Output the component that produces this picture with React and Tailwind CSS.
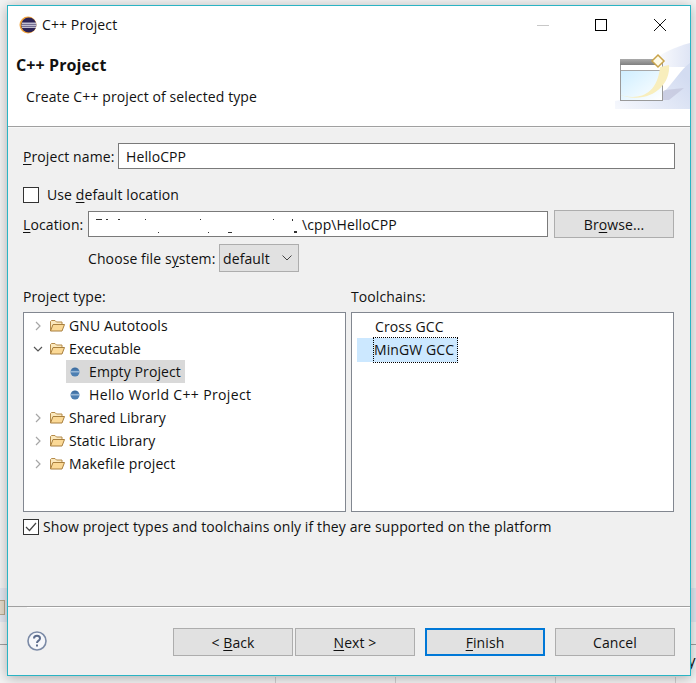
import React from "react";

const Chevron = ({ open }) => (
  <svg width="10" height="10" viewBox="0 0 10 10" className="shrink-0" fill="none">
    {open ? (
      <path d="M1 3l4 4 4-4" stroke="#555" strokeWidth="1.2" />
    ) : (
      <path d="M3 1l4 4-4 4" stroke="#a6a6a6" strokeWidth="1.2" />
    )}
  </svg>
);

const Folder = () => (
  <svg width="16" height="13" viewBox="0 0 16 13" className="shrink-0 block">
    <path d="M1.5 12V2.5L2.5 1.5H6L7.5 3H13V5.5" fill="#fbe8bd" stroke="#b58b4a" />
    <path d="M1.5 12L4 5.5H15.5L13 12Z" fill="#fbd996" stroke="#a87f3e" />
  </svg>
);

const Ball = () => (
  <svg width="10" height="10" viewBox="0 0 10 10" className="shrink-0">
    <circle cx="5" cy="5" r="4.5" fill="#4d7fb2" />
    <rect x="0.5" y="4.2" width="9" height="1.2" fill="#a9c4de" />
    <path d="M1.5 2.4A4.5 4.5 0 0 1 8.5 2.4Z" fill="#3f6d9e" />
  </svg>
);

const TreeRow = ({ open, children }) => (
  <div className="flex items-center h-[23px] pl-[9px]">
    <Chevron open={open} />
    <span className="ml-[6px]"><Folder /></span>
    <span className="ml-[4px]">{children}</span>
  </div>
);

const Button = ({ children, primary }) => (
  <button
    className={
      primary
        ? "h-[28px] w-[120px] pt-[2px] bg-[#e1e1e1] border-2 border-[#0078d7] text-[#111]"
        : "h-[28px] w-[120px] pt-[2px] bg-[#e1e1e1] border border-[#adadad] text-[#111]"
    }
  >
    {children}
  </button>
);

const Mn = ({ children }) => <span className="underline underline-offset-2 decoration-1">{children}</span>;

// what is left of the blurred path, as it shows in the reference
const specks = [
  "left-[7px] top-[7px] w-[6px] h-px",
  "left-[17px] top-[7px] w-[2px] h-px",
  "left-[29px] top-[7px] w-[2px] h-px",
  "left-[56px] top-[7px] w-px h-px",
  "left-[111px] top-[7px] w-px h-px",
  "left-[184px] top-[7px] w-px h-px",
  "left-[203px] top-[7px] w-px h-[2px]",
  "left-[69px] top-[20px] w-px h-px",
  "left-[119px] top-[20px] w-px h-px",
  "left-[139px] top-[20px] w-[4px] h-px",
  "left-[205px] top-[19px] w-[3px] h-[2px]",
];

export default function App() {
  return (
    <div className="relative w-[696px] h-[683px] overflow-hidden bg-[#f4f4f4] font-['Open_Sans',sans-serif] text-[14px] leading-[20px] text-[#111] tracking-[0.1px]">
      {/* app behind the dialog */}
      <div className="absolute left-0 top-[588px] w-[8px] h-[34px] bg-[#e4e9f2]" />
      <div className="absolute left-0 top-[600px] w-[5px] h-[15px] bg-[#e6dccb] border border-l-0 border-[#b8a98f]" />
      <div className="absolute left-0 top-[644px] w-[8px] h-px bg-[#a0a0a0]" />
      <div className="absolute left-[691px] top-[588px] w-[5px] h-[34px] bg-[#e4e9f2]" />
      <div className="absolute left-[691px] top-[644px] w-[5px] h-px bg-[#a0a0a0]" />
      <div className="absolute left-[275px] top-[677px] w-px h-[6px] bg-[#cfcfcf]" />
      <div className="absolute left-[395px] top-[677px] w-px h-[6px] bg-[#cfcfcf]" />
      <div className="absolute left-[555px] top-[677px] w-px h-[6px] bg-[#cfcfcf]" />
      <div className="absolute left-[675px] top-[677px] w-px h-[6px] bg-[#cfcfcf]" />
      <div className="absolute left-[688px] top-[650px] text-[15px]">y</div>

      <div className="relative ml-[7px] mt-[5px] w-[684px] h-[671px] border border-[#2ab4c4] bg-[#f0f0f0] shadow-[0_2px_12px_rgba(0,0,0,0.3)] flex flex-col">
        {/* header */}
        <div className="h-[121px] bg-white border-b border-[#a0a0a0] shrink-0 flex flex-col">
          <div className="h-[38px] flex items-center pl-[11px] shrink-0">
            <svg width="18" height="18" viewBox="0 0 18 18" className="shrink-0">
              <circle cx="9" cy="9" r="8.5" fill="#f2a33a" />
              <circle cx="9.8" cy="9" r="7.6" fill="#2c2255" />
              <rect x="3" y="6.6" width="14" height="1.2" fill="#e6e4ef" />
              <rect x="2.5" y="8.6" width="15" height="1.2" fill="#e6e4ef" />
              <rect x="3" y="10.6" width="14" height="1.2" fill="#e6e4ef" />
            </svg>
            <span className="ml-[5px]">C++ Project</span>
            <div className="ml-auto flex items-center pr-[24px]">
              <div className="w-[12px] h-px bg-[#c8c8c8] mr-[46px]" />
              <div className="w-[12px] h-[12px] border border-black mr-[47px]" />
              <svg width="12" height="12" viewBox="0 0 12 12" fill="none">
                <path d="M0 0l12 12M12 0L0 12" stroke="#111" strokeWidth="1" />
              </svg>
            </div>
          </div>
          <div className="flex flex-1">
            <div className="flex-1 pl-[8px]">
              <div className="font-bold text-[16px] mt-[11px]">C++ Project</div>
              <div className="ml-[10px] mt-[12px]">Create C++ project of selected type</div>
            </div>
            <svg width="75" height="66" viewBox="0 0 75 66" className="shrink-0 self-start -mt-px">
              <defs>
                <linearGradient id="pane" x1="0" y1="0" x2="1" y2="1">
                  <stop offset="0" stopColor="#cfeeff" />
                  <stop offset="1" stopColor="#ffffff" />
                </linearGradient>
                <linearGradient id="lobe" x1="0" y1="0.5" x2="1" y2="0.5">
                  <stop offset="0" stopColor="#ffffff" />
                  <stop offset="1" stopColor="#dfe5f5" />
                </linearGradient>
                <linearGradient id="lobe2" x1="0" y1="1" x2="1" y2="0.4">
                  <stop offset="0" stopColor="#f6f8fd" />
                  <stop offset="1" stopColor="#d3dcf1" />
                </linearGradient>
                <linearGradient id="bar" x1="0" y1="0" x2="0" y2="1">
                  <stop offset="0" stopColor="#aaaaaa" />
                  <stop offset="1" stopColor="#808080" />
                </linearGradient>
              </defs>
              <path d="M36 20C46 10 60 4 75 0V24H40Z" fill="url(#lobe)" />
              <path d="M0 66V58L48 50C60 38 66 26 75 20V66Z" fill="url(#lobe2)" />
              <path d="M36 57L50 47L69 45L54 57Z" fill="#c3c6dc" opacity="0.75" />
              <rect x="5.5" y="16.5" width="42" height="41" fill="#fff" stroke="#9a9a9a" />
              <rect x="5" y="16" width="38" height="6" fill="url(#bar)" />
              <rect x="6" y="28" width="41" height="29" fill="url(#pane)" />
              <rect x="6" y="27" width="41" height="1" fill="#a8a8a8" />
              <path d="M1 50C18 58 42 56 45 24L54 22C56 45 30 64 1 50Z" fill="#f8eebd" />
              <path d="M43 18L49 12L55 18L49 24Z" fill="#fffbe8" stroke="#c9a34a" strokeWidth="1.5" transform="translate(-6 0)" />
            </svg>
          </div>
        </div>

        {/* form */}
        <div className="flex-1 flex flex-col px-[15px] pt-[15px] min-h-0 border-t border-[#f7f7f7]">
          <div className="flex items-center h-[26px]">
            <span className="w-[95px] shrink-0 pt-[2px]"><Mn>P</Mn>roject name:</span>
            <div className="flex-1 h-[26px] bg-white border border-[#7a7a7a] pl-[7px] pt-[2px] flex items-center">HelloCPP</div>
          </div>

          <div className="flex items-center h-[17px] mt-[17px]">
            <div className="w-[16px] h-[16px] bg-white border border-[#333] shrink-0" />
            <span className="ml-[8px]">Use <Mn>d</Mn>efault location</span>
          </div>

          <div className="flex items-center h-[28px] mt-[7px]">
            <span className="w-[65px] shrink-0 pt-[2px]"><Mn>L</Mn>ocation:</span>
            <div className="w-[460px] h-[26px] bg-white border border-[#7a7a7a] flex items-center relative pl-[213px] pt-[2px]">
              {specks.map((s) => (
                <div key={s} className={"absolute bg-[#333] " + s} />
              ))}
              <span>\cpp\HelloCPP</span>
            </div>
            <button className="ml-[6px] w-[120px] h-[28px] pt-[2px] bg-[#e1e1e1] border border-[#adadad]">Br<Mn>o</Mn>wse...</button>
          </div>

          <div className="flex items-center h-[28px] mt-[6px] pl-[65px]">
            <span className="w-[131px] shrink-0 pt-[2px]">Choose file s<Mn>y</Mn>stem:</span>
            <div className="w-[80px] h-[28px] bg-[#e1e1e1] border border-[#adadad] flex items-center justify-between pl-[3px] pr-[6px]">
              <span className="pt-[2px]">default</span>
              <svg width="10" height="6" viewBox="0 0 10 6" fill="none">
                <path d="M0.5 0.5L5 5L9.5 0.5" stroke="#444" />
              </svg>
            </div>
          </div>

          <div className="flex mt-[15px] gap-[5px] w-[651px]">
            <div className="w-[323px] shrink-0">
              <div className="h-[20px]">Project type:</div>
              <div className="mt-[5px] h-[200px] bg-white border border-[#828790] pt-[1px]">
                <TreeRow>GNU Autotools</TreeRow>
                <TreeRow open>Executable</TreeRow>
                <div className="flex items-center h-[23px] ml-[42px] w-[119px] bg-[#d9d9d9] pl-[4px]">
                  <Ball />
                  <span className="ml-[9px]">Empty Project</span>
                </div>
                <div className="flex items-center h-[23px] ml-[42px] pl-[4px]">
                  <Ball />
                  <span className="ml-[9px] tracking-[0.35px]">Hello World C++ Project</span>
                </div>
                <TreeRow>Shared Library</TreeRow>
                <TreeRow>Static Library</TreeRow>
                <TreeRow>Makefile project</TreeRow>
              </div>
            </div>
            <div className="flex-1">
              <div className="h-[20px]">Toolchains:</div>
              <div className="mt-[5px] h-[200px] bg-white border border-[#828790] pt-[2px] pl-[5px]">
                <div className="h-[23px] pl-[18px] flex items-center">Cross GCC</div>
                <div className="h-[24px] w-[101px] bg-[#cce8ff] pl-[17px] flex items-center">
                  <span className="outline-1 outline-dotted outline-black w-[83px] h-[24px] leading-[24px]">MinGW GCC</span>
                </div>
              </div>
            </div>
          </div>

          <div className="flex items-center mt-[7px] h-[16px]">
            <div className="w-[16px] h-[16px] bg-white border border-[#333] shrink-0 flex items-center justify-center">
              <svg width="12" height="10" viewBox="0 0 12 10" fill="none">
                <path d="M1 5l3.5 3.5L11 1" stroke="#444" strokeWidth="1.2" />
              </svg>
            </div>
            <span className="ml-[4px]">Show project types and toolchains only if they are supported on the platform</span>
          </div>
        </div>

        {/* footer */}
        <div className="h-[69px] shrink-0 border-t border-[#a0a0a0] flex items-start pl-[19px]">
          <div className="w-full border-t border-white pt-[20px] flex items-start">
            <svg width="20" height="20" viewBox="0 0 20 20" className="mt-[3px] shrink-0">
              <circle cx="10" cy="10" r="9" fill="#f6f7fa" stroke="#7b8aa6" strokeWidth="1.6" />
              <path d="M7 7.5C7 3.8 13 3.8 13 7.5C13 9.8 10 9.5 10 12" fill="none" stroke="#5c6c8c" strokeWidth="2" />
              <rect x="9" y="13.5" width="2" height="2" fill="#5c6c8c" />
            </svg>
            <div className="ml-[126px] flex">
              <Button>&lt; <Mn>B</Mn>ack</Button>
              <span className="ml-[2px]"><Button><Mn>N</Mn>ext &gt;</Button></span>
              <span className="ml-[10px]"><Button primary><Mn>F</Mn>inish</Button></span>
              <span className="ml-[10px]"><Button>Cancel</Button></span>
            </div>
          </div>
        </div>
      </div>
    </div>
  );
}
